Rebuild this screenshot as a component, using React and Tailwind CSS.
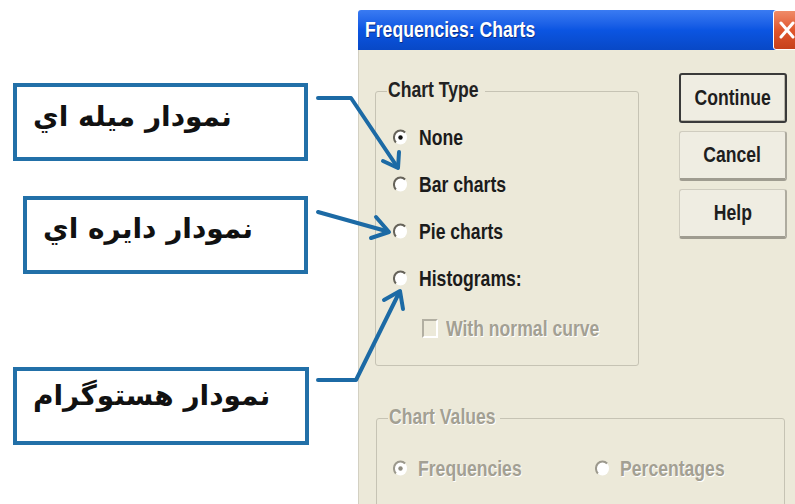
import React from "react";

const Narrow = ({ children, className = "" }) => (
  <span
    className={`inline-block whitespace-nowrap origin-left scale-x-[0.8] ${className}`}
  >
    {children}
  </span>
);

const Radio = ({ on, dim }) => (
  <svg width="15" height="17" viewBox="0 0 15 17" className="shrink-0">
    <ellipse cx="7.5" cy="8.5" rx="6.5" ry="7" fill="#fff" />
    <path
      d="M12.1 3.5 A6.5 7 0 0 0 2.9 13.5"
      stroke={dim ? "#9c998d" : "#66635a"}
      strokeWidth="2"
      fill="none"
    />
    {on && <circle cx="7.5" cy="8.5" r="2.2" fill={dim ? "#8f8c80" : "#111"} />}
  </svg>
);

const Label = ({ text, pt }) => (
  <div
    className={`h-[78px] border-[4px] border-[#2270a8] bg-white pl-[16px] ${pt}`}
  >
    <span
      dir="rtl"
      className="inline-block font-['DejaVu_Sans',sans-serif] text-[28px] font-bold leading-none text-[#111]"
    >
      {text}
    </span>
  </div>
);

const XpButton = ({ children, main }) => (
  <button
    className={`flex h-[50px] w-[108px] items-center justify-center rounded-[3px] bg-[#efede2] text-[22px] font-bold leading-none text-[#1e1e1e] ${
      main
        ? "border-2 border-[#3a3a3a] shadow-[inset_-1px_-1px_0_#b9b6a9]"
        : "border border-[#cfccbf] border-b-[3px] border-r-2 border-b-[#9f9c90] border-r-[#aeab9f]"
    }`}
  >
    <span className="inline-block whitespace-nowrap origin-center scale-x-[0.8]">
      {children}
    </span>
  </button>
);

const RadioRow = ({ label, on }) => (
  <div className="flex h-[47px] items-center gap-[11px]">
    <Radio on={on} />
    <Narrow className="text-[22px] font-bold leading-none text-[#1b1b1b]">
      {label}
    </Narrow>
  </div>
);

const dimText =
  "text-[22px] font-bold leading-none text-[#a3a093] [text-shadow:1px_1px_0_#ffffff]";

export default function App() {
  return (
    <div className="relative flex h-[504px] w-[795px] overflow-hidden bg-white font-['Liberation_Sans',Arial,sans-serif]">
      <div className="flex w-[358px] shrink-0 flex-col">
        <div className="ml-[13px] mt-[83px] w-[295px]">
          <Label text="نمودار ميله اي" pt="pt-[16px]" />
        </div>
        <div className="ml-[23px] mt-[35px] w-[285px]">
          <Label text="نمودار دايره اي" pt="pt-[15px]" />
        </div>
        <div className="ml-[13px] mt-[93px] w-[296px]">
          <Label text="نمودار هستوگرام" pt="pt-[11px]" />
        </div>
      </div>

      <div className="mt-[10px] flex w-[445px] shrink-0 flex-col">
        <div className="flex h-[42px] items-center rounded-tl-[3px] bg-linear-to-b from-[#3a7bf2] via-[#0b55e2] to-[#0848c6] pl-[7px] pr-[3px]">
          <Narrow className="text-[22px] font-bold leading-none text-white [text-shadow:1px_1px_0_#0a2f86]">
            Frequencies: Charts
          </Narrow>
          <div className="ml-auto flex h-[40px] w-[27px] items-center justify-center rounded-[3px] border border-white bg-linear-to-b from-[#ef8b68] via-[#e0562c] to-[#c6401b]">
            <svg width="16" height="20" viewBox="0 0 16 20">
              <path
                d="M2 3 L14 17 M14 3 L2 17"
                stroke="#fff"
                strokeWidth="3"
                strokeLinecap="round"
              />
            </svg>
          </div>
        </div>

        <div className="flex-1 border-l border-[#d3d0c2] bg-[#ece9d9]">
          <div className="flex">
            <fieldset className="ml-[16px] mt-[29px] h-[287px] w-[264px] rounded-[3px] border border-[#c6c3b4]">
              <legend className="ml-[11px] w-[98px] pl-[1px]">
                <Narrow className="text-[22px] font-bold leading-none text-[#222]">
                  Chart Type
                </Narrow>
              </legend>
              <div className="mt-[10px] flex flex-col pl-[17px]">
                <RadioRow label="None" on />
                <RadioRow label="Bar charts" />
                <RadioRow label="Pie charts" />
                <RadioRow label="Histograms:" />
                <div className="mt-[3px] flex h-[47px] items-center gap-[8px] pl-[29px]">
                  <div className="h-[19px] w-[16px] shrink-0 border-2 border-b-white border-l-[#b2afa2] border-r-white border-t-[#b2afa2] bg-[#ece9d9]" />
                  <Narrow className={dimText}>With normal curve</Narrow>
                </div>
              </div>
            </fieldset>

            <div className="ml-[40px] mt-[23px] flex flex-col gap-2">
              <XpButton main>Continue</XpButton>
              <XpButton>Cancel</XpButton>
              <XpButton>Help</XpButton>
            </div>
          </div>

          <fieldset className="ml-[17px] mt-[40px] h-[120px] w-[409px] rounded-[3px] border border-[#c6c3b4]">
            <legend className="ml-[11px] w-[112px] pl-[1px]">
              <Narrow className={dimText}>Chart Values</Narrow>
            </legend>
            <div className="mt-[14px] flex h-[47px] items-center pl-[16px]">
              <div className="flex w-[202px] items-center gap-[10px]">
                <Radio on dim />
                <Narrow className={dimText}>Frequencies</Narrow>
              </div>
              <div className="flex items-center gap-[10px]">
                <Radio dim />
                <Narrow className={dimText}>Percentages</Narrow>
              </div>
            </div>
          </fieldset>
        </div>
      </div>

      <svg
        className="pointer-events-none absolute inset-0"
        width="795"
        height="504"
        viewBox="0 0 795 504"
      >
        <g
          stroke="#1c6aa5"
          strokeWidth="4"
          fill="none"
          strokeLinecap="round"
          strokeLinejoin="round"
        >
          <path d="M318 98 H351 L396 165" />
          <path d="M383 161 L398 168 L399 152" />
          <path d="M318 212 L386 231" />
          <path d="M376 217 L389 232 L371 238" />
          <path d="M318 380 H356 L398 295" />
          <path d="M384 300 L400 291 L403 309" />
        </g>
      </svg>
    </div>
  );
}
